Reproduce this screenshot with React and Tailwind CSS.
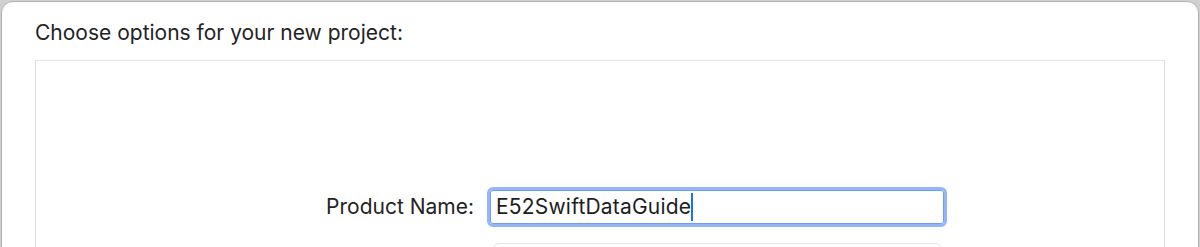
import React from "react";

const font = { fontFamily: "Inter, 'Noto Sans', sans-serif" };

const App = () => {
  return (
    <div className="h-[247px] w-[1200px] overflow-hidden bg-[#cfcfcf] pt-px px-px" style={font}>
      <div className="h-[260px] rounded-t-[12px] border border-[#b4b4b4] bg-white px-[33px]">
        <p className="pt-[18px] text-[21px] leading-[26px] text-[#232323]">
          Choose options for your new project:
        </p>
        <div className="mt-[14px] h-[240px] border border-[#e2e2e2] bg-white pt-[126px]">
          <div className="flex items-center">
            <label className="w-[438px] text-right text-[21px] leading-[26px] text-[#232323]">
              Product Name:
            </label>
            <div className="ml-[13px] h-[40px] w-[460px] rounded-[6px] border-[3px] border-[#94b6f7]">
              <div className="flex h-full items-center rounded-[3px] border border-[#6f9cf0] bg-white pl-[5px]">
                <span className="text-[21px] leading-[26px] text-[#1d1d1d] tracking-[0.2px]">E52SwiftDataGuide</span>
                <span className="h-[28px] w-[2px] bg-[#1f6ef7]" />
              </div>
            </div>
          </div>
          <div className="ml-[457px] mt-[16px] h-[30px] w-[449px] rounded-[6px] border border-[#e6e6e6]" />
        </div>
      </div>
    </div>
  );
};

export default App;
